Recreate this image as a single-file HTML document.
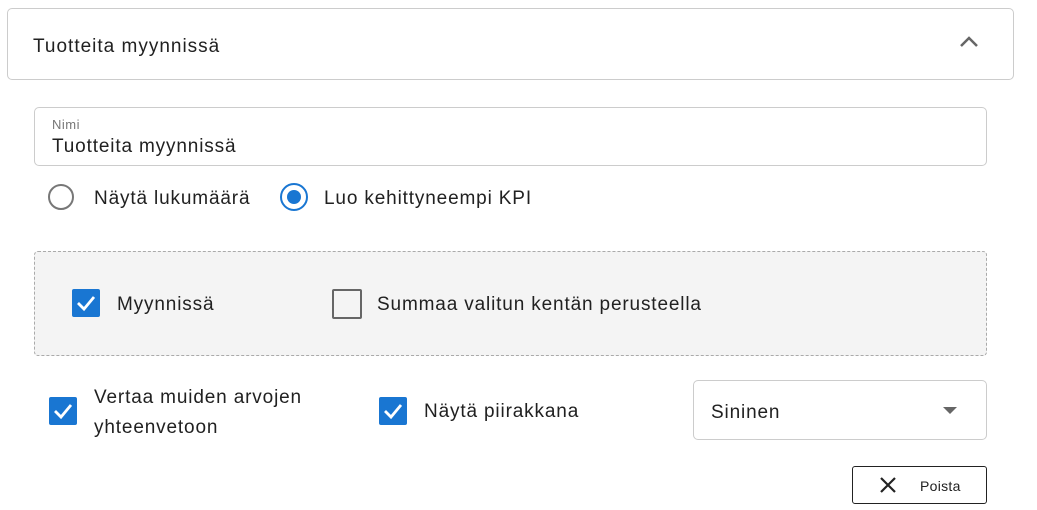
<!DOCTYPE html>
<html><head><style>
body{margin:0;width:1037px;height:510px;background:#fff;font-family:"Liberation Sans",sans-serif;color:#212121;position:relative;overflow:hidden}
.a{position:absolute}
.t{letter-spacing:0.85px;font-size:19px}
.cb{position:absolute;width:28px;height:28px;border-radius:2px;background:#1976d2}
.cb svg{position:absolute;left:3px;top:3px}
</style></head><body>
<div class="a" style="left:7px;top:8px;width:1005px;height:70px;border:1px solid #ccc;border-radius:5px"></div>
<div class="a t" style="left:33px;top:36px;letter-spacing:1px">Tuotteita myynnissä</div>
<svg class="a" style="left:958px;top:34px" width="22" height="16"><path d="M3 12 L11 4 L19 12" stroke="#666" stroke-width="2.5" fill="none"/></svg>

<div class="a" style="left:34px;top:107px;width:951px;height:57px;border:1px solid #ccc;border-radius:5px"></div>
<div class="a" style="left:52px;top:117px;font-size:13px;color:#777;letter-spacing:0.5px">Nimi</div>
<div class="a t" style="left:52px;top:136px">Tuotteita myynnissä</div>

<div class="a" style="left:48px;top:184px;width:26px;height:26px;border:2.5px solid #777;border-radius:50%;box-sizing:border-box"></div>
<div class="a t" style="left:94px;top:188px">Näytä lukumäärä</div>
<div class="a" style="left:280px;top:183px;width:28px;height:28px;border:2.5px solid #1976d2;border-radius:50%;box-sizing:border-box"></div>
<div class="a" style="left:287px;top:190px;width:14px;height:14px;background:#1976d2;border-radius:50%"></div>
<div class="a t" style="left:324px;top:188px">Luo kehittyneempi KPI</div>

<div class="a" style="left:34px;top:251px;width:951px;height:103px;border:1px dashed #aaa;border-radius:4px;background:#f4f4f4"></div>
<div class="cb" style="left:72px;top:289px"><svg width="22" height="22"><path d="M3 11 L9 17 L19 5" stroke="#fff" stroke-width="2.8" fill="none"/></svg></div>
<div class="a t" style="left:117px;top:294px">Myynnissä</div>
<div class="a" style="left:332px;top:289px;width:30px;height:30px;border:2.5px solid #666;border-radius:2px;box-sizing:border-box"></div>
<div class="a t" style="left:377px;top:294px">Summaa valitun kentän perusteella</div>

<div class="cb" style="left:49px;top:397px"><svg width="22" height="22"><path d="M3 11 L9 17 L19 5" stroke="#fff" stroke-width="2.8" fill="none"/></svg></div>
<div class="a t" style="left:94px;top:383px;line-height:30px">Vertaa muiden arvojen<br>yhteenvetoon</div>
<div class="cb" style="left:379px;top:397px"><svg width="22" height="22"><path d="M3 11 L9 17 L19 5" stroke="#fff" stroke-width="2.8" fill="none"/></svg></div>
<div class="a t" style="left:424px;top:401px">Näytä piirakkana</div>

<div class="a" style="left:693px;top:380px;width:292px;height:58px;border:1px solid #ccc;border-radius:5px"></div>
<div class="a t" style="left:711px;top:402px">Sininen</div>
<div class="a" style="left:943px;top:407px;width:0;height:0;border-left:7px solid transparent;border-right:7px solid transparent;border-top:7px solid #666"></div>

<div class="a" style="left:852px;top:466px;width:133px;height:36px;border:1px solid #222;border-radius:3px"></div>
<svg class="a" style="left:879px;top:476px" width="18" height="18"><path d="M2 2 L16 16 M16 2 L2 16" stroke="#222" stroke-width="2.2"/></svg>
<div class="a" style="left:920px;top:478px;font-size:14px;letter-spacing:0.3px">Poista</div>
</body></html>
